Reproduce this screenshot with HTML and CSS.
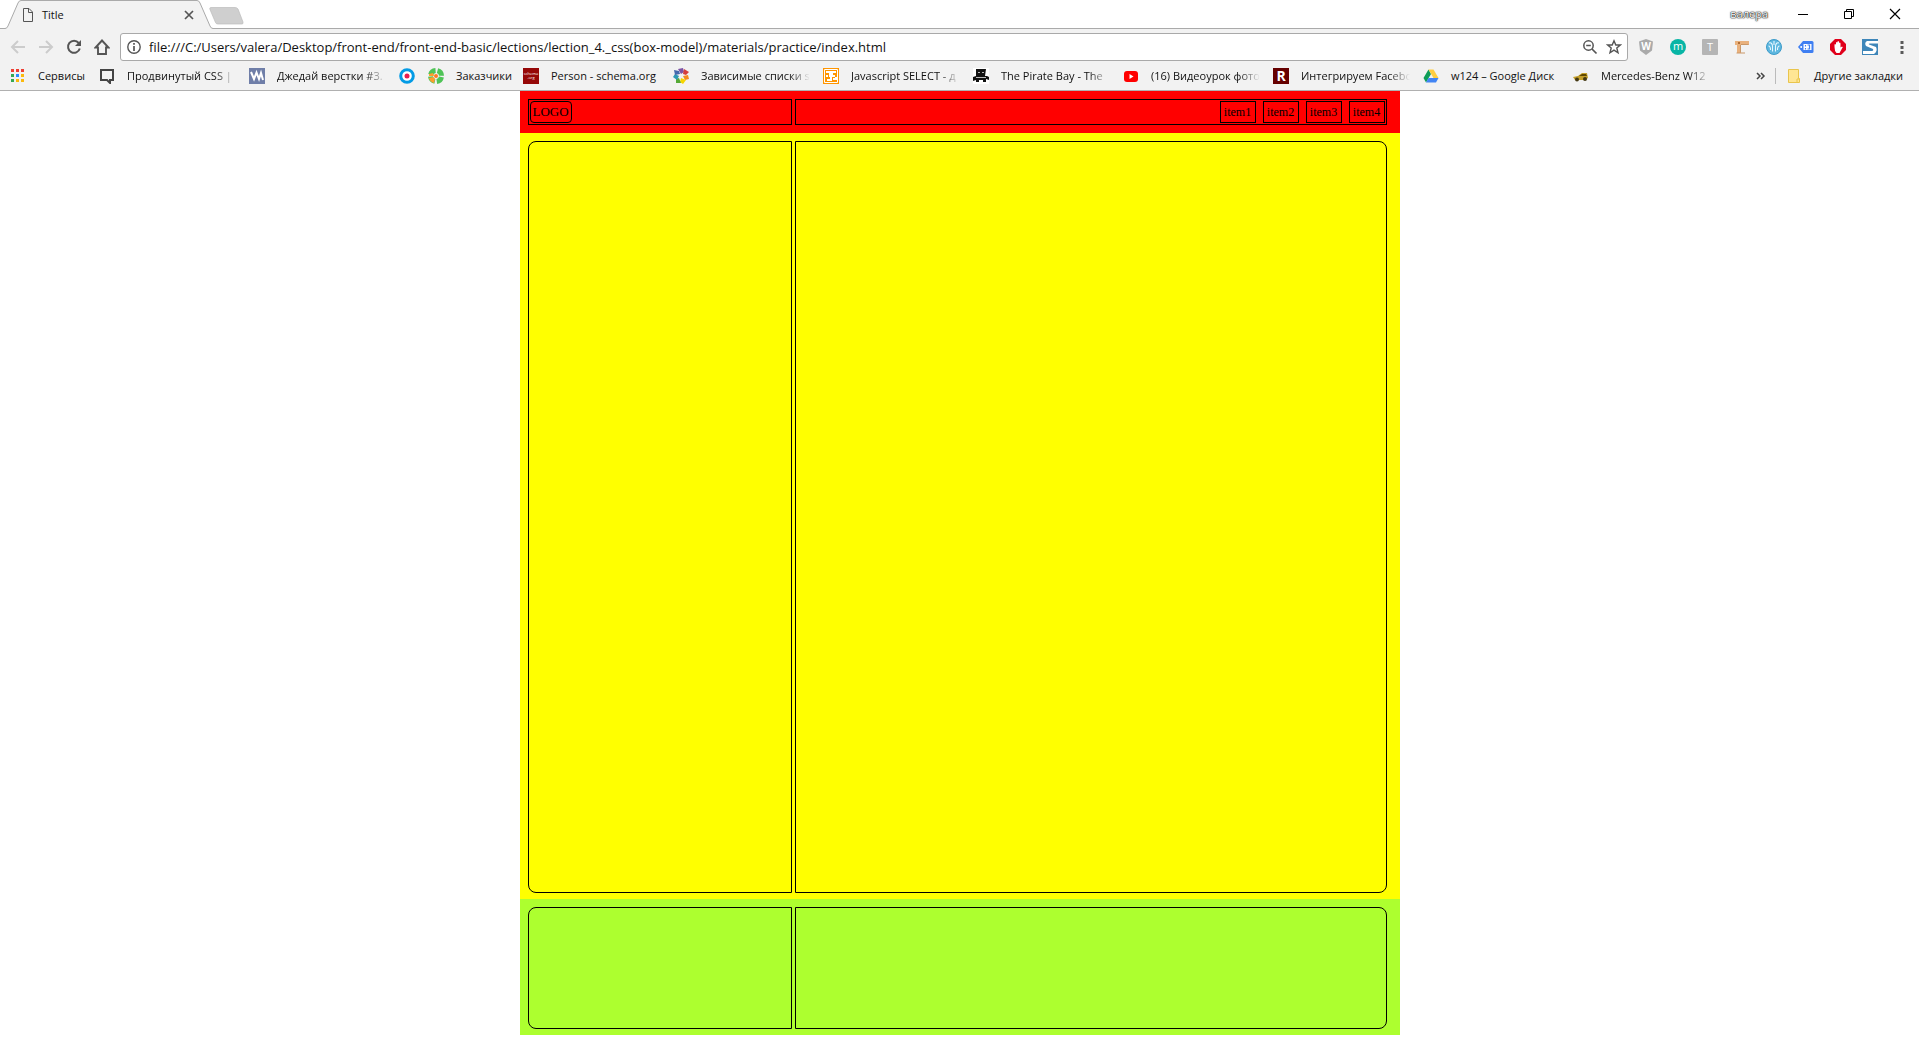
FILE: index.html
```html
<!DOCTYPE html>
<html lang="ru">
<head>
<meta charset="utf-8">
<title>Title</title>
<link rel="stylesheet" href="styles.css">
</head>
<body>
<header class="browser">
  <div class="tabstrip">
    <div class="tab">
      <svg class="tab-shape" width="208" height="29" viewBox="0 0 208 29"><path d="M0 29V28.500Q2 28.500 3 26L13 3Q14 .5 16 .5H192Q194 .5 195 3L205 26Q206 28.500 208 28.500V29Z" fill="#f2f2f2"/><path d="M0 28.500Q2 28.500 3 26L13 3Q14 .5 16 .5H192Q194 .5 195 3L205 26Q206 28.500 208 28.500" fill="none" stroke="#aaa"/></svg>
      <svg class="tab-icon" width="12" height="14" viewBox="0 0 12 14"><path d="M1.500 .5H7L10.500 4V13.500H1.500ZM6.500 .5V4.500H10.500" fill="none" stroke="#555"/></svg>
      <span class="tab-title">Title</span>
      <button class="plain tab-close" aria-label="Закрыть вкладку"><svg width="10" height="10" viewBox="0 0 10 10"><path d="M1 1L9 9M9 1L1 9" stroke="#555" stroke-width="1.700"/></svg></button>
    </div>
    <button class="plain new-tab" aria-label="Новая вкладка"><svg width="35" height="18" viewBox="0 0 35 18"><path d="M2 .5H26Q28 .5 29 2L34 15Q34.500 17 33 17H9Q7 17 6.500 15.500L.8 2Q.5 .5 2 .5Z" fill="#cfcfcf" stroke="#bbb" stroke-width=".7"/></svg></button>
    <span class="profile">валера</span>
    <div class="window-buttons">
      <button class="plain" aria-label="Свернуть"><svg width="12" height="12" viewBox="0 0 12 12"><path d="M1 6.500H11" stroke="#000"/></svg></button>
      <button class="plain" aria-label="Восстановить"><svg width="12" height="12" viewBox="0 0 12 12"><path d="M1.500 3.500H8.500V10.500H1.500ZM3.500 3.500V1.500H10.500V8.500H8.500" fill="none" stroke="#000"/></svg></button>
      <button class="plain" aria-label="Закрыть"><svg width="12" height="12" viewBox="0 0 12 12"><path d="M1 1L11 11M11 1L1 11" stroke="#000" stroke-width="1.200"/></svg></button>
    </div>
  </div>

  <div class="toolbar">
    <div class="nav">
      <button class="plain" aria-label="Назад"><svg width="16" height="16" viewBox="0 0 16 16"><path d="M15 8H2.500M8 2L2 8L8 14" fill="none" stroke="#ccc" stroke-width="2"/></svg></button>
      <button class="plain" aria-label="Вперёд"><svg width="16" height="16" viewBox="0 0 16 16"><path d="M1 8H13.500M8 2L14 8L8 14" fill="none" stroke="#ccc" stroke-width="2"/></svg></button>
      <button class="plain" aria-label="Обновить"><svg width="16" height="16" viewBox="0 0 16 16"><path d="M12.700 4A6 6 0 1 0 13.800 9.500" fill="none" stroke="#555" stroke-width="2"/><path d="M15 1V7H9Z" fill="#555"/></svg></button>
      <button class="plain" aria-label="Домой"><svg width="16" height="16" viewBox="0 0 16 16"><path d="M8 1.500L1.500 8.500H4V15H12V8.500H14.500Z" fill="none" stroke="#555" stroke-width="1.900"/></svg></button>
    </div>
    <form class="omnibox">
      <svg width="14" height="14" viewBox="0 0 14 14"><circle cx="7" cy="7" r="6.200" fill="none" stroke="#555" stroke-width="1.400"/><path d="M7 3V4.800M7 6V11" stroke="#555" stroke-width="1.700"/></svg>
      <input class="address" type="text" aria-label="Адрес" value="file:///C:/Users/valera/Desktop/front-end/front-end-basic/lections/lection_4._css(box-model)/materials/practice/index.html">
      <button class="plain" type="button" aria-label="Масштаб"><svg width="16" height="16" viewBox="0 0 16 16"><circle cx="6.500" cy="6.500" r="4.700" fill="none" stroke="#555" stroke-width="1.500"/><path d="M4.200 6.500H8.800M10 10L14.500 14.500" stroke="#555" stroke-width="1.700"/></svg></button>
      <button class="plain" type="button" aria-label="В закладки"><svg width="16" height="16" viewBox="0 0 16 16"><path d="M8 1.800L9.800 6H14.300L10.800 9L12 13.800L8 11.200L4 13.800L5.200 9L1.700 6H6.200Z" fill="none" stroke="#555" stroke-width="1.400"/></svg></button>
    </form>
    <div class="extensions">
      <button class="plain"><svg width="16" height="16" viewBox="0 0 16 16"><path d="M8 0L15 2.500L14 11.500L8 16L2 11.500L1 2.500Z" fill="#aaa"/><text class="glyph bold" x="8" y="11" font-size="10">W</text></svg></button>
      <button class="plain"><svg width="16" height="16" viewBox="0 0 16 16"><circle cx="8" cy="8" r="8" fill="#08b5a5"/><text class="glyph" x="8" y="11" font-size="11">m</text></svg></button>
      <button class="plain"><svg width="16" height="16" viewBox="0 0 16 16"><rect width="16" height="16" rx="1" fill="#b5b5b5"/><text class="glyph" x="8" y="12" font-size="11">T</text></svg></button>
      <button class="plain" aria-label="Линейка"><svg width="16" height="16" viewBox="0 0 16 16"><path d="M1 2H15V6H7V14H3V6H1Z" fill="#e9b17d"/><path d="M7 5.500H14.500M6.500 6V13.500M2.500 14H11" stroke="#c99768" fill="none"/><path d="M4 3H6V5H4Z" fill="#b06d35"/></svg></button>
      <button class="plain" aria-label="Сеть"><svg width="16" height="16" viewBox="0 0 16 16"><circle cx="8" cy="8" r="7.500" fill="#5eb7df" stroke="#3d9bc9"/><path d="M3 4Q6 3 6.500 7V12.500M13 4Q10 3 9.500 7V12.500M2.500 7Q4.500 7 4.500 11M13.500 7Q11.500 7 11.500 11M8 2V6" fill="none" stroke="#e7f7ff" stroke-width="1.100"/></svg></button>
      <button class="plain" aria-label="Метка"><svg width="16" height="16" viewBox="0 0 16 16"><path d="M5 2H14Q15.500 2 15.500 3.500V12.500Q15.500 14 14 14H5L0 8Z" fill="#3f7ff2"/><path d="M5.500 5H13.500V11H5.500Z" fill="#fff"/><path d="M7.500 6V7.500M7.500 9V10.500M9.500 6H11.500V10H9.500" stroke="#3f7ff2" stroke-width="1.200" fill="none"/><circle cx="3.200" cy="8" r="1" fill="#fff"/></svg></button>
      <button class="plain" aria-label="Блокировщик"><svg width="16" height="16" viewBox="0 0 16 16"><path d="M5 0H11L16 5V11L11 16H5L0 11V5Z" fill="#e0001b"/><path d="M4.500 8V5.500Q5.500 4.500 6 6V3.500Q7 2.500 7.500 3.500V2.500Q8.500 1.500 9 3V4Q10.200 3 10.500 4.500V8.500L12 7.500Q13.500 8 12 9.500L9.500 14H6.500Q4.500 12 4.500 8Z" fill="#fff"/></svg></button>
      <button class="plain" aria-label="S"><svg width="16" height="16" viewBox="0 0 16 16"><path d="M0 0H16V16H0Z" fill="#3e86b9"/><path d="M16 2H5Q2 4 4 7L11 10Q12 12 9 12H1V15H12Q16 12 14 8L7 5.500Q6 4.500 8 4.500H16Z" fill="#fff"/></svg></button>
      <button class="plain" aria-label="Меню"><svg width="16" height="16" viewBox="0 0 16 16"><path d="M6.500 2H9.500V5H6.500ZM6.500 7H9.500V10H6.500ZM6.500 12H9.500V15H6.500Z" fill="#5a5a5a"/></svg></button>
    </div>
  </div>

  <nav class="bookmarks" aria-label="Закладки">
    <a href="#" class="bm"><svg width="16" height="16" viewBox="0 0 16 16"><path d="M1 1H4V4H1ZM6 1H9V4H6ZM11 1H14V4H11Z" fill="#ee3e33"/><path d="M1 6H4V9H1ZM1 11H4V14H1Z" fill="#35a853"/><path d="M6 6H9V9H6Z" fill="#2a8cff"/><path d="M11 6H14V9H11ZM6 11H9V14H6ZM11 11H14V14H11Z" fill="#fbb90c"/></svg><span class="label short">Сервисы</span></a>
    <a href="#" class="bm"><svg width="16" height="16" viewBox="0 0 16 16"><path d="M2 2H14V12H11V15L8 12H2Z" fill="none" stroke="#444" stroke-width="2"/></svg><span class="label">Продвинутый CSS |</span></a>
    <a href="#" class="bm"><svg width="16" height="16" viewBox="0 0 16 16"><path d="M0 0H16V16H0Z" fill="#6f7ea8"/><path d="M2 4L5 11L7.500 4.500L10 11L12 5L14 12" fill="none" stroke="#fff" stroke-width="2"/></svg><span class="label">Джедай верстки #3.</span></a>
    <a href="#" class="bm" aria-label="Закладка"><svg width="16" height="16" viewBox="0 0 16 16"><circle cx="8" cy="8" r="6.300" fill="#fff" stroke="#039be5" stroke-width="3"/><circle cx="8" cy="8" r="2.500" fill="#e91e50"/></svg></a>
    <a href="#" class="bm"><svg width="16" height="16" viewBox="0 0 16 16"><circle cx="8" cy="8" r="5.500" fill="none" stroke="#4fc457" stroke-width="5" stroke-dasharray="6.600 2" stroke-dashoffset="-1"/><path d="M1 10L5 9L7 11L6 15Q2 14 1 10ZM1 6L5 5L6 8L1 8Z" fill="#ff9e2c"/><circle cx="8" cy="8" r="2" fill="#ff7b24"/></svg><span class="label medium">Заказчики</span></a>
    <a href="#" class="bm"><svg width="16" height="16" viewBox="0 0 16 16"><path d="M0 0H16V16H0Z" fill="#960808"/><text class="glyph" x="8" y="7" font-size="4">schema</text><text class="glyph" x="8" y="11" font-size="4">.org</text></svg><span class="label full">Person - schema.org</span></a>
    <a href="#" class="bm"><svg width="16" height="16" viewBox="0 0 16 16"><path d="M8 6L5 1L10 0L11 4Z" fill="#7c54a5"/><path d="M10 6L11 1L16 4L13 7Z" fill="#d63d3d"/><path d="M10 8L15 7L16 11L12 12Z" fill="#f58a20"/><path d="M8 10L13 12L10 16L7 14Z" fill="#f6d500"/><path d="M6 10L8 15L3 15L3 11Z" fill="#55a936"/><path d="M6 8L4 12L0 9L2 6Z" fill="#2c98b5"/><path d="M7 6L2 7L1 2L6 3Z" fill="#4468ad"/><circle cx="8" cy="8" r="2" fill="#f2f2f2"/></svg><span class="label">Зависимые списки s</span></a>
    <a href="#" class="bm"><svg width="16" height="16" viewBox="0 0 16 16"><path d="M0 0H16V16H0Z" fill="#ff9500"/><path d="M1.500 1.500H14.500V14.500H1.500Z" fill="none" stroke="#fff"/><path d="M3 4H7V8H12M9 7V4H13M3 8H5M4 12H8V9M10 11H13V9" fill="none" stroke="#fff" stroke-width="2"/></svg><span class="label">Javascript SELECT - д</span></a>
    <a href="#" class="bm"><svg width="16" height="16" viewBox="0 0 16 16"><path d="M0 0H16V16H0Z" fill="#fff"/><path d="M3 1H13L12 8H14L16 9V12L13 11V14H10V12H6V14H3V12L0 13V9L3 8Z" fill="#111"/><path d="M5 4.500H7M9 4.500H11M3 9.500H13" stroke="#bbb"/></svg><span class="label">The Pirate Bay - The</span></a>
    <a href="#" class="bm"><svg width="16" height="16" viewBox="0 0 16 16"><rect x="1" y="3" width="14" height="11" rx="3" fill="#f00"/><path d="M6.500 6L10.500 8.500L6.500 11Z" fill="#fff"/></svg><span class="label">(16) Видеоурок фото</span></a>
    <a href="#" class="bm"><svg width="16" height="16" viewBox="0 0 16 16"><path d="M0 0H16V16H0Z" fill="#600"/><text class="glyph bold" x="8" y="13" font-size="14">R</text></svg><span class="label">Интегрируем Facebo</span></a>
    <a href="#" class="bm"><svg width="16" height="16" viewBox="0 0 16 16"><path d="M5.500 1.500L8 6L3 14.500L.5 10Z" fill="#0f9d58"/><path d="M5.500 1.500H10.500L15.500 10H10.500Z" fill="#ffcd40"/><path d="M5.500 10H15.500L13 14.500H3Z" fill="#4285f4"/></svg><span class="label full">w124 – Google Диск</span></a>
    <a href="#" class="bm"><svg width="16" height="16" viewBox="0 0 16 16"><path d="M0 9L5 8L9 5H14L15 10L12 12H2Z" fill="#c5a02b"/><path d="M6 8L9 6H13L14 8Z" fill="#604800"/><circle cx="4" cy="11.500" r="2" fill="#443813"/><circle cx="12" cy="11" r="2" fill="#443813"/></svg><span class="label">Mercedes-Benz W12</span></a>
    <div class="bookmarks-end">
      <button class="plain" aria-label="Ещё закладки"><svg width="10" height="10" viewBox="0 0 10 10"><path d="M1 2L4 5L1 8M5 2L8 5L5 8" fill="none" stroke="#444" stroke-width="1.500"/></svg></button>
      <a href="#" class="bm other"><svg width="16" height="16" viewBox="0 0 16 16"><path d="M2.500 1.500H12.500V10.500H13.500V14.500H2.500Z" fill="#ffe694" stroke="#e9c54c"/><path d="M11 14V11H13" fill="none" stroke="#e9c54c"/></svg><span>Другие закладки</span></a>
    </div>
  </nav>
</header>

<div class="page">
  <header class="row head">
    <div class="cell side"><a href="#" class="logo">LOGO</a></div>
    <nav class="cell menu"><a href="#">item1</a><a href="#">item2</a><a href="#">item3</a><a href="#">item4</a></nav>
  </header>
  <main class="row content">
    <aside class="cell side round-left"></aside>
    <section class="cell round-right"></section>
  </main>
  <footer class="row foot">
    <div class="cell side round-left"></div>
    <div class="cell round-right"></div>
  </footer>
</div>
</body>
</html>
```
FILE: styles.css
```css
* { box-sizing: border-box; }

body {
  margin: 0;
  background: #fff;
  color: #000;
  font-family: "Liberation Serif", serif;
}

svg { display: block; flex: none; }
a { color: inherit; text-decoration: none; }

.plain {
  display: flex;
  align-items: center;
  justify-content: center;
  margin: 0;
  padding: 0;
  border: 0;
  background: none;
}

.glyph { fill: #fff; font-family: "Open Sans", sans-serif; text-anchor: middle; }
.glyph.bold { font-weight: 700; }

/* Browser frame */
.browser {
  background: #f2f2f2;
  border-bottom: 1px solid #b0b0b0;
  color: #111;
  font: 11px/16px "Open Sans", sans-serif;
}

.tabstrip {
  display: flex;
  height: 29px;
  padding: 0 1px 0 5px;
  background: #fff;
  border-bottom: 1px solid #aaa;
}

.tab {
  position: relative;
  display: flex;
  align-items: center;
  width: 208px;
  height: 29px;
  padding: 0 19px 0 17px;
}

.tab-shape { position: absolute; left: 0; top: 0; }
.tab-icon, .tab-title, .tab-close { position: relative; }
.tab-title { flex: 1; margin-left: 8px; }

.new-tab { height: 28px; padding-top: 3px; margin-left: -4px; }

.profile {
  margin-left: auto;
  padding: 6px 12px 0 0;
  color: #fff;
  text-shadow: 0 0 1px #000, 0 0 1px #000, 0 0 2px #333;
}

.window-buttons { display: flex; height: 27px; }
.window-buttons button { width: 46px; }

.toolbar {
  display: flex;
  align-items: center;
  gap: 10px;
  padding: 4px 9px 0 10px;
}

.nav { display: flex; gap: 12px; }
.extensions { display: flex; gap: 16px; }

.omnibox {
  display: flex;
  flex: 1;
  align-items: center;
  gap: 8px;
  height: 28px;
  padding: 0 5px 0 6px;
  background: #fff;
  border: 1px solid #a9a9a9;
  border-radius: 3px;
}

.address {
  flex: 1;
  min-width: 0;
  height: 24px;
  margin: 0;
  padding: 0;
  border: 0;
  outline: 0;
  background: none;
  color: #111;
  font: 13px/24px "Open Sans", sans-serif;
}

.bookmarks {
  display: flex;
  align-items: center;
  gap: 13px;
  height: 29px;
  padding: 0 16px 0 10px;
  white-space: nowrap;
}

.bm { display: flex; align-items: center; gap: 12px; }

.label {
  width: 109px;
  overflow: hidden;
  -webkit-mask-image: linear-gradient(to right, #000 88px, transparent 109px);
  mask-image: linear-gradient(to right, #000 88px, transparent 109px);
}

.label.short { width: 48px; }
.label.medium { width: 54px; }
.label.short, .label.medium, .label.full { overflow: visible; -webkit-mask: none; mask: none; }

.bookmarks-end { display: flex; align-items: center; gap: 9px; margin-left: auto; }
.other { padding-left: 10px; border-left: 1px solid #bbb; }

/* Page layout */
.page { max-width: 880px; margin: 0 auto; }

.row {
  display: flex;
  gap: 3px;
  padding: 8px 13px 6px 8px;
}

.cell { flex: 1; border: 1px solid #000; }
.side { flex: 0 0 264px; }
.round-left { border-radius: 8px 0 0 8px; }
.round-right { border-radius: 0 8px 8px 0; }

.head { padding-bottom: 8px; background: #f00; font-size: 13px; line-height: 20px; }
.head .cell { display: flex; padding: 1px; }
.logo { padding: 0 2px; border: 1px solid #000; border-radius: 4px; }
.menu { justify-content: flex-end; gap: 7px; font-size: 12px; }
.menu a { width: 36px; border: 1px solid #000; text-align: center; }

.content { background: #ff0; }
.content .cell { min-height: 752px; }
.foot { background: #adff2f; }
.foot .cell { min-height: 122px; }
```
